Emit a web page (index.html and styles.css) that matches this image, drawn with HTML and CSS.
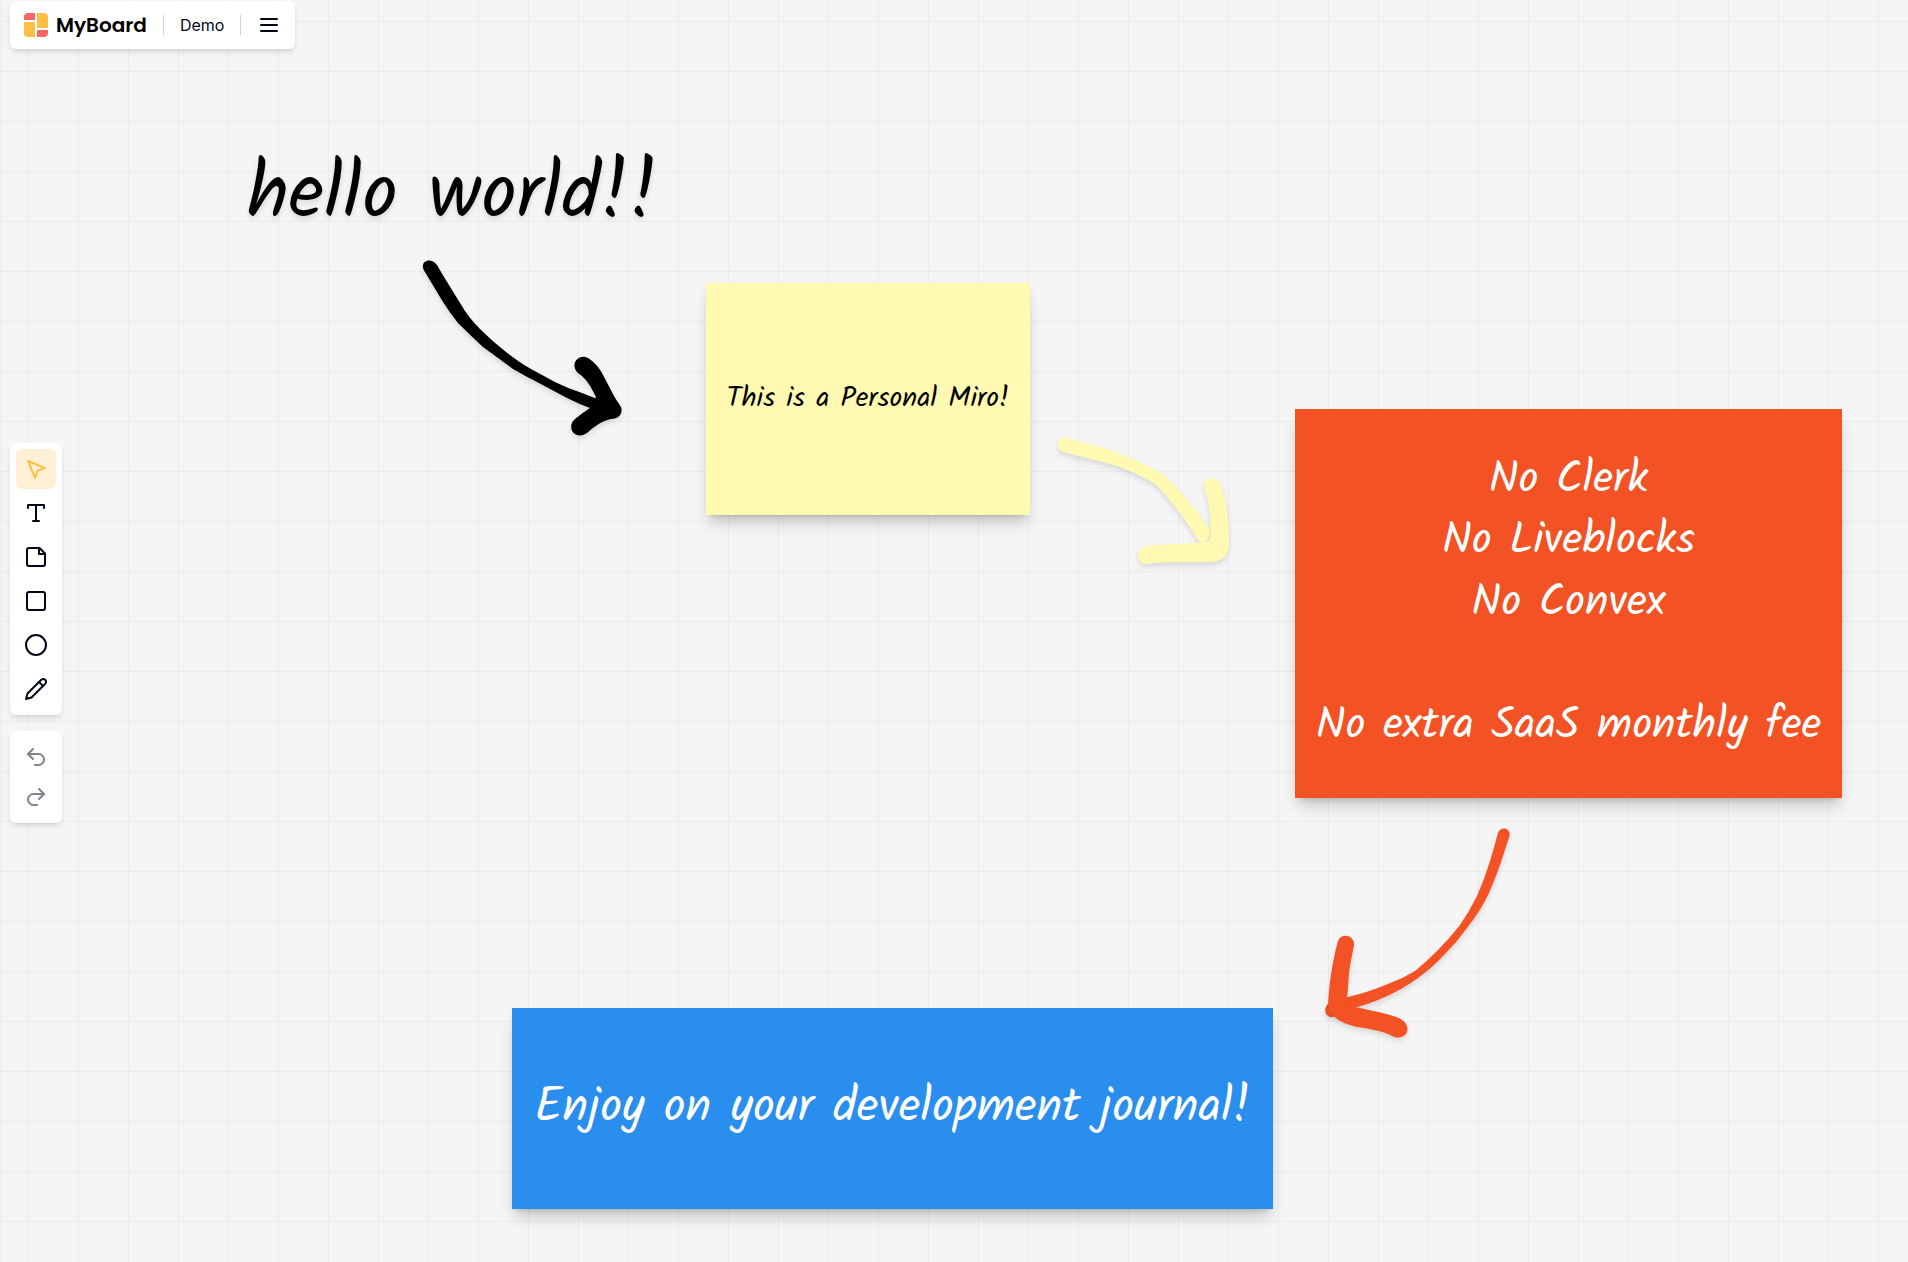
FILE: index.html
```html
<!DOCTYPE html>
<html lang="en">
<head>
<meta charset="utf-8">
<meta name="viewport" content="width=device-width, initial-scale=1">
<title>Demo - MyBoard</title>
<link rel="stylesheet" href="styles.css">
</head>
<body>
<main class="board">
  <section class="canvas" aria-label="Canvas">
    <p class="layer text-layer">hello world!!</p>
    <div class="layer note note-yellow"><p>This is a Personal Miro!</p></div>
    <div class="layer note note-orange"><p>No Clerk<br>No Liveblocks<br>No Convex<br><br>No extra SaaS monthly fee</p></div>
    <div class="layer note note-blue"><p>Enjoy on your development journal!</p></div>

    <svg class="strokes" aria-hidden="true">
      <g fill="#000">
        <path class="stroke" d="M425 272 C418 262 430 256 437 265 L444 277 Q452 290 460 303 Q468 317 480 329 Q493 342 506 352 Q520 363 531 369 L555 382 Q567 388 582 393 L600 400 L598 410 L590 408 Q579 404 567 398 L537 382 Q525 376 513 369 Q498 358 483 347 Q470 335 458 323 Q450 313 443 302Z"/>
        <path class="stroke" d="M578 373 C569 364 579 353 588 358 C594 362 598 366 602 373 L614 396 C617 402 621 405 621.500 409 C622 415 618 419 611 419 C601 421 594 427 587 433 C577 440 567 431 573 421 C577 417 584 412 590 408 L596 397 C591 387 587 379 578 373Z"/>
      </g>
      <g fill="#fff9b1">
        <path class="stroke" d="M1063 452 C1054 448 1057 436 1066 438 L1090 444 Q1102 447 1115 452 L1140 462 Q1151 467 1161 473 Q1168 478 1175 486 Q1184 496 1193 507 L1212 532 L1203 547 L1200 543 Q1188 524 1177 509 L1167 497 Q1158 485 1150 481 Q1136 473 1120 467 Q1105 462 1090 459Z"/>
        <path class="stroke" d="M1204 487 C1201 477 1217 475 1220 484 C1225 496 1227 509 1229 526 V544 C1229 556 1222 562 1209 562 C1190 563 1170 561 1147 564 C1135 564 1135 547 1147 546 C1163 544 1180 544 1197 543 C1208 543 1211 542 1211 532 C1211 515 1209 503 1204 487Z"/>
      </g>
      <g fill="#f35324">
        <path class="stroke" d="M1498 833 C1500 826 1511 827 1509.500 836 L1501 862 Q1492 888 1485 901 Q1478 914 1467 928 Q1457 942 1445 954 Q1433 967 1418 978 Q1403 989 1385 997 Q1367 1005 1350 1009 L1333 1017 C1324 1018 1323 1007 1329 1003 L1348 997 L1363 993 Q1376 989 1388 984 Q1402 979 1415 971 Q1426 962 1437 951 Q1449 939 1460 925 Q1469 912 1477 896 Q1485 878 1491 858Z"/>
        <path class="stroke" d="M1338 941 C1341 932 1355 935 1354 945 C1352 956 1350 964 1349 974 L1347 1000 C1347 1006 1353 1007 1360 1008 C1373 1011 1386 1013 1399 1018 C1415 1026 1406 1043 1392 1036 C1383 1031 1371 1029 1357 1027 C1345 1024 1331 1019 1328 1006 C1329 985 1332 963 1338 941Z"/>
      </g>
    </svg>
  </section>

  <header class="panel topbar">
    <a class="brand" href="#">
      <svg class="logo" viewBox="0 0 24 24" aria-hidden="true">
        <path fill="#ff6668" d="M4 0h7v7H0V4a4 4 0 0 1 4-4Z"/>
        <path fill="#ffbe44" d="M13 0h7a4 4 0 0 1 4 4v11H13Z"/>
        <path fill="#ffbe44" d="M0 9h11v15H4a4 4 0 0 1-4-4Z"/>
        <path fill="#ff6668" d="M13 17h11v3a4 4 0 0 1-4 4h-7Z"/>
      </svg>
      <span>MyBoard</span>
    </a>
    <span class="divider"></span>
    <button class="board-name" type="button">Demo</button>
    <span class="divider"></span>
    <button class="menu" type="button" aria-label="Menu">
      <svg class="icon" viewBox="0 0 24 24" aria-hidden="true"><path d="M4 6h16M4 12h16M4 18h16"/></svg>
    </button>
  </header>

  <aside class="tools">
    <div class="panel toolgroup toolgroup-main">
      <button class="tool tool-active" type="button" aria-label="Select"><svg class="icon" viewBox="0 0 24 24" aria-hidden="true"><path d="m4 4 7.070 17 2.510-7.390L21 11.070z"/></svg></button>
      <button class="tool" type="button" aria-label="Text"><svg class="icon" viewBox="0 0 24 24" aria-hidden="true"><path d="M4 7V4h16v3M9 20h6M12 4v16"/></svg></button>
      <button class="tool" type="button" aria-label="Sticky note"><svg class="icon" viewBox="0 0 24 24" aria-hidden="true"><path d="M15.500 3H5a2 2 0 0 0-2 2v14c0 1.100.900 2 2 2h14a2 2 0 0 0 2-2V8.500L15.500 3Z"/><path d="M15 3v6h6"/></svg></button>
      <button class="tool" type="button" aria-label="Rectangle"><svg class="icon" viewBox="0 0 24 24" aria-hidden="true"><rect x="3" y="3" width="18" height="18" rx="2"/></svg></button>
      <button class="tool" type="button" aria-label="Ellipse"><svg class="icon" viewBox="0 0 24 24" aria-hidden="true"><circle cx="12" cy="12" r="10"/></svg></button>
      <button class="tool" type="button" aria-label="Pen"><svg class="icon" viewBox="0 0 24 24" aria-hidden="true"><path d="M17 3a2.850 2.830 0 1 1 4 4L7.500 20.500 2 22l1.500-5.500Z"/><path d="m15 5 4 4"/></svg></button>
    </div>
    <div class="panel toolgroup">
      <button class="tool" type="button" aria-label="Undo" disabled><svg class="icon" viewBox="0 0 24 24" aria-hidden="true"><path d="M9 14 4 9l5-5"/><path d="M4 9h10.500a5.500 5.500 0 0 1 0 11H11"/></svg></button>
      <button class="tool" type="button" aria-label="Redo" disabled><svg class="icon" viewBox="0 0 24 24" aria-hidden="true"><path d="m15 14 5-5-5-5"/><path d="M20 9H9.500a5.500 5.500 0 0 0 0 11H13"/></svg></button>
    </div>
  </aside>
</main>
</body>
</html>
```

FILE: styles.css
```css
* { box-sizing: border-box; }

body {
  margin: 0;
  font-family: Inter, "Liberation Sans", sans-serif;
  font-size: 16px;
  color: #020817;
}

p { margin: 0; }

button {
  padding: 0;
  border: 0;
  background: none;
  font: inherit;
  color: inherit;
}

.board {
  position: relative;
  display: flex;
  flex-direction: column;
  align-items: flex-start;
  min-height: 100vh;
  padding: 1px 10px 0;
  overflow: hidden;
  background-color: #f5f5f5;
  background-image:
    linear-gradient(#e8e8e8, #e8e8e8),
    linear-gradient(to right, #ebebeb 1px, transparent 1px),
    linear-gradient(to bottom, #ebebeb 1px, transparent 1px);
  background-size: 1px 100%, 50px 50px, 50px 50px;
  background-position: 1px 0, 28px 21px, 28px 21px;
  background-repeat: no-repeat, repeat, repeat;
}

.panel {
  position: relative;
  background: #fff;
  border-radius: 6px;
  box-shadow: 0 4px 6px -1px rgb(0 0 0 / 10%), 0 2px 4px -2px rgb(0 0 0 / 10%);
}

.icon {
  display: block;
  width: 24px;
  height: 24px;
  fill: none;
  stroke: currentColor;
  stroke-width: 2;
  stroke-linecap: round;
  stroke-linejoin: round;
}

.topbar {
  display: flex;
  align-items: center;
  height: 48px;
  padding: 0 14px;
}

.brand {
  display: flex;
  align-items: center;
  gap: 8px;
  font-family: Poppins, Inter, sans-serif;
  font-size: 20px;
  font-weight: 600;
  color: #000;
  text-decoration: none;
}

.logo { width: 24px; height: 24px; }

.divider {
  width: 1px;
  height: 20px;
  margin: 0 16px;
  background: #cfd5de;
}

/* Tools are centred in the space left under the top bar */
.tools {
  display: flex;
  flex: 1;
  flex-direction: column;
  gap: 16px;
  justify-content: center;
  padding-bottom: 46px;
}

.toolgroup { padding: 6px; }

.toolgroup-main { display: grid; gap: 4px; }

.tool {
  display: grid;
  place-items: center;
  width: 40px;
  height: 40px;
  border-radius: 6px;
}

.tool-active { background: #fff0d6; color: #ffbe44; }

.tool:disabled { opacity: 0.5; }

/* Free canvas: every layer has its own place */
.canvas { position: absolute; inset: 0; }

.layer {
  position: absolute;
  font-family: Kalam, Lato, cursive;
  line-height: 1.4;
}

.text-layer {
  left: 247px;
  top: 142px;
  font-size: 78px;
  white-space: nowrap;
  color: #000;
  filter: drop-shadow(0 4px 3px rgb(0 0 0 / 7%)) drop-shadow(0 2px 2px rgb(0 0 0 / 6%));
}

.note {
  display: flex;
  align-items: center;
  justify-content: center;
  text-align: center;
  white-space: nowrap;
  box-shadow: 0 10px 15px -3px rgb(0 0 0 / 20%), 0 4px 6px -4px rgb(0 0 0 / 20%);
}

.note-yellow {
  left: 706px;
  top: 283px;
  width: 324px;
  height: 232px;
  background: #fff9b1;
  color: #000;
  font-size: 28px;
}

.note-orange {
  left: 1295px;
  top: 409px;
  width: 547px;
  height: 389px;
  background: #f35324;
  color: #fff;
  font-size: 44px;
}

.note-blue {
  left: 512px;
  top: 1008px;
  width: 761px;
  height: 201px;
  background: #298eee;
  color: #fff;
  font-size: 48px;
}

.strokes {
  position: absolute;
  inset: 0;
  width: 100%;
  height: 100%;
  overflow: visible;
}

.stroke { filter: drop-shadow(0 4px 3px rgb(0 0 0 / 7%)) drop-shadow(0 2px 2px rgb(0 0 0 / 6%)); }
```
